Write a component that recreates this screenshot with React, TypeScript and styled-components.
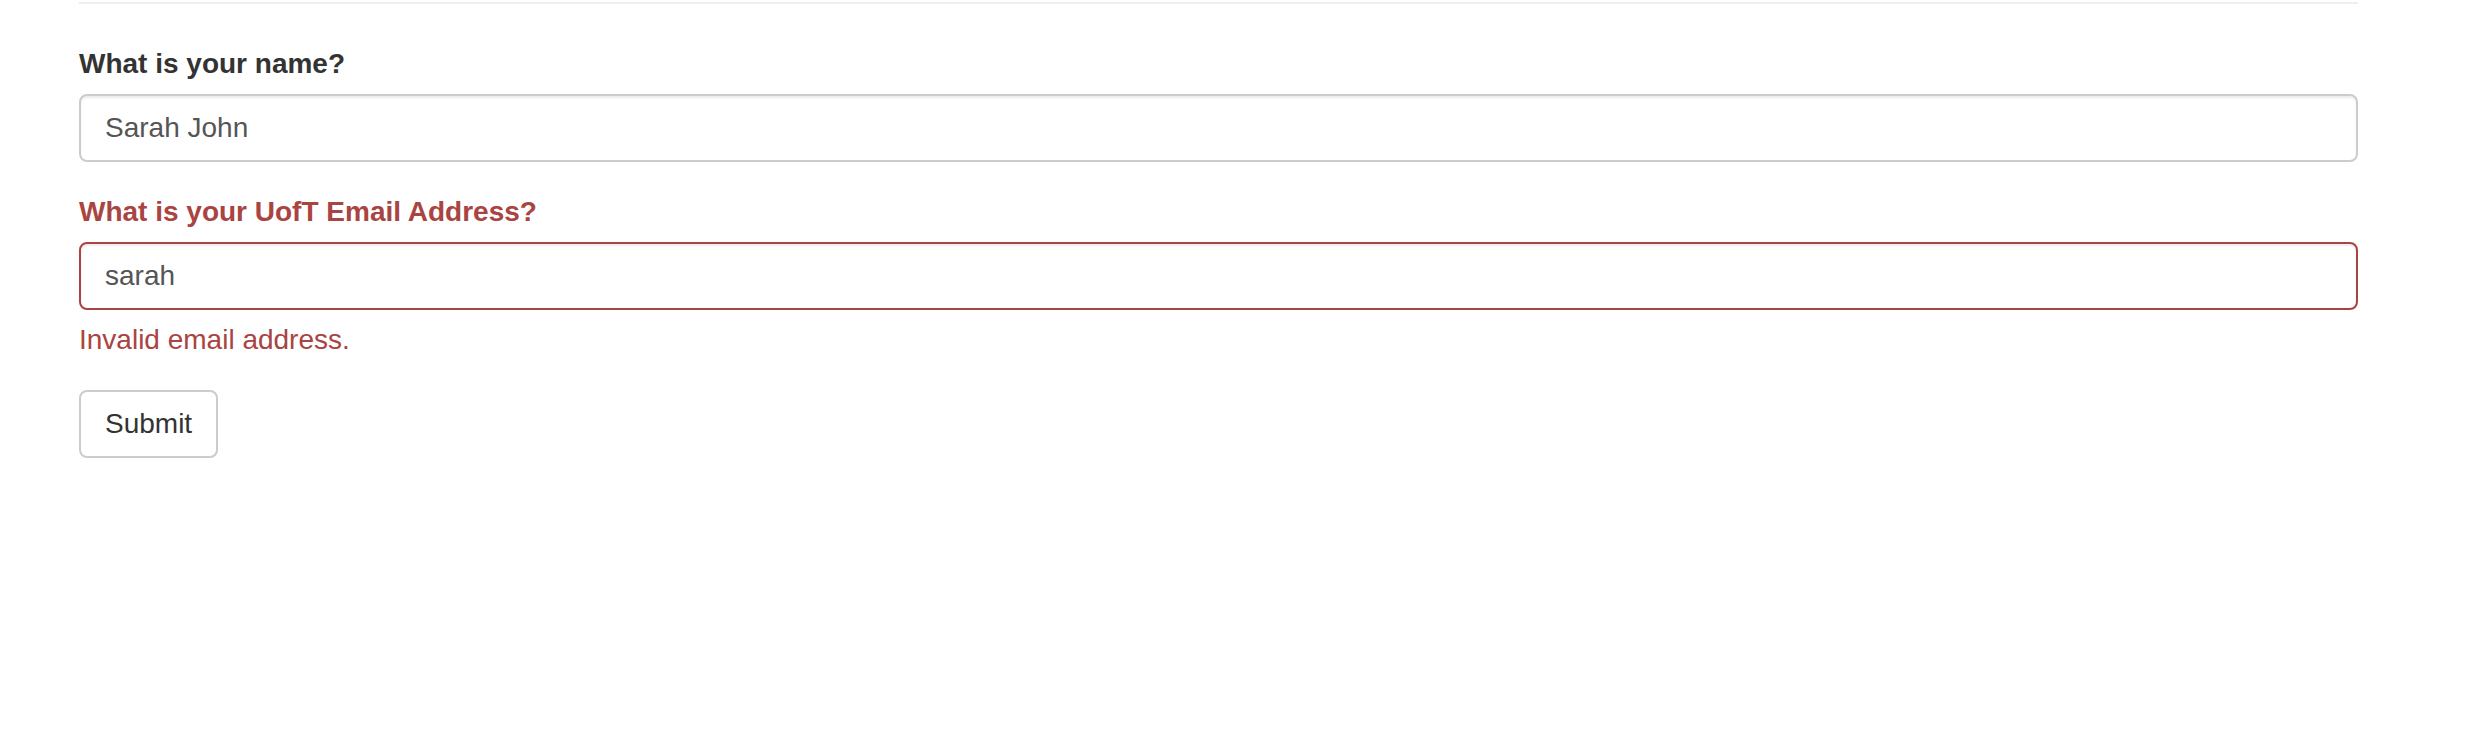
import React from "react";
import styled, { createGlobalStyle } from "styled-components";

const GlobalStyle = createGlobalStyle`
  html, body {
    margin: 0;
    padding: 0;
    background: #fff;
  }
  body {
    font-family: "Liberation Sans", Arial, Helvetica, sans-serif;
    font-size: 28px;
    line-height: 40px;
    color: #333;
  }
  * { box-sizing: border-box; }
`;

const Page = styled.div`
  width: 2470px;
  padding: 2px 112px 0 79px;
`;

const Rule = styled.hr`
  margin: 0 0 40px 0;
  border: 0;
  border-top: 2px solid #eee;
  height: 0;
`;

const Form = styled.form`
  display: flex;
  flex-direction: column;
`;

const Group = styled.div`
  display: flex;
  flex-direction: column;
  margin-bottom: 30px;
`;

const Label = styled.label<{ $error?: boolean }>`
  display: block;
  margin-bottom: 10px;
  font-weight: 700;
  font-size: 28px;
  line-height: 40px;
  color: ${(p) => (p.$error ? "#a94442" : "#333")};
`;

const Input = styled.input<{ $error?: boolean }>`
  display: block;
  width: 100%;
  height: 68px;
  padding: 12px 24px;
  font-family: "Liberation Sans", Arial, Helvetica, sans-serif;
  font-size: 28px;
  line-height: 40px;
  color: #555;
  background: #fff;
  border: 2px solid ${(p) => (p.$error ? "#a94442" : "#ccc")};
  border-radius: 8px;
  box-shadow: inset 0 2px 2px rgba(0, 0, 0, 0.075);
  outline: none;
`;

const Help = styled.span`
  display: block;
  margin-top: 10px;
  font-size: 28px;
  line-height: 40px;
  color: #a94442;
`;

const Actions = styled.div`
  display: flex;
`;

const Button = styled.button`
  display: inline-block;
  padding: 12px 24px;
  font-family: "Liberation Sans", Arial, Helvetica, sans-serif;
  font-size: 28px;
  line-height: 40px;
  color: #333;
  background: #fff;
  border: 2px solid #ccc;
  border-radius: 8px;
  cursor: pointer;
`;

export default function App() {
  return (
    <>
      <GlobalStyle />
      <Page>
        <Rule />
        <Form onSubmit={(e) => e.preventDefault()}>
          <Group>
            <Label htmlFor="name">What is your name?</Label>
            <Input id="name" defaultValue="Sarah John" />
          </Group>
          <Group>
            <Label htmlFor="email" $error>
              What is your UofT Email Address?
            </Label>
            <Input id="email" defaultValue="sarah" $error />
            <Help>Invalid email address.</Help>
          </Group>
          <Actions>
            <Button type="submit">Submit</Button>
          </Actions>
        </Form>
      </Page>
    </>
  );
}
